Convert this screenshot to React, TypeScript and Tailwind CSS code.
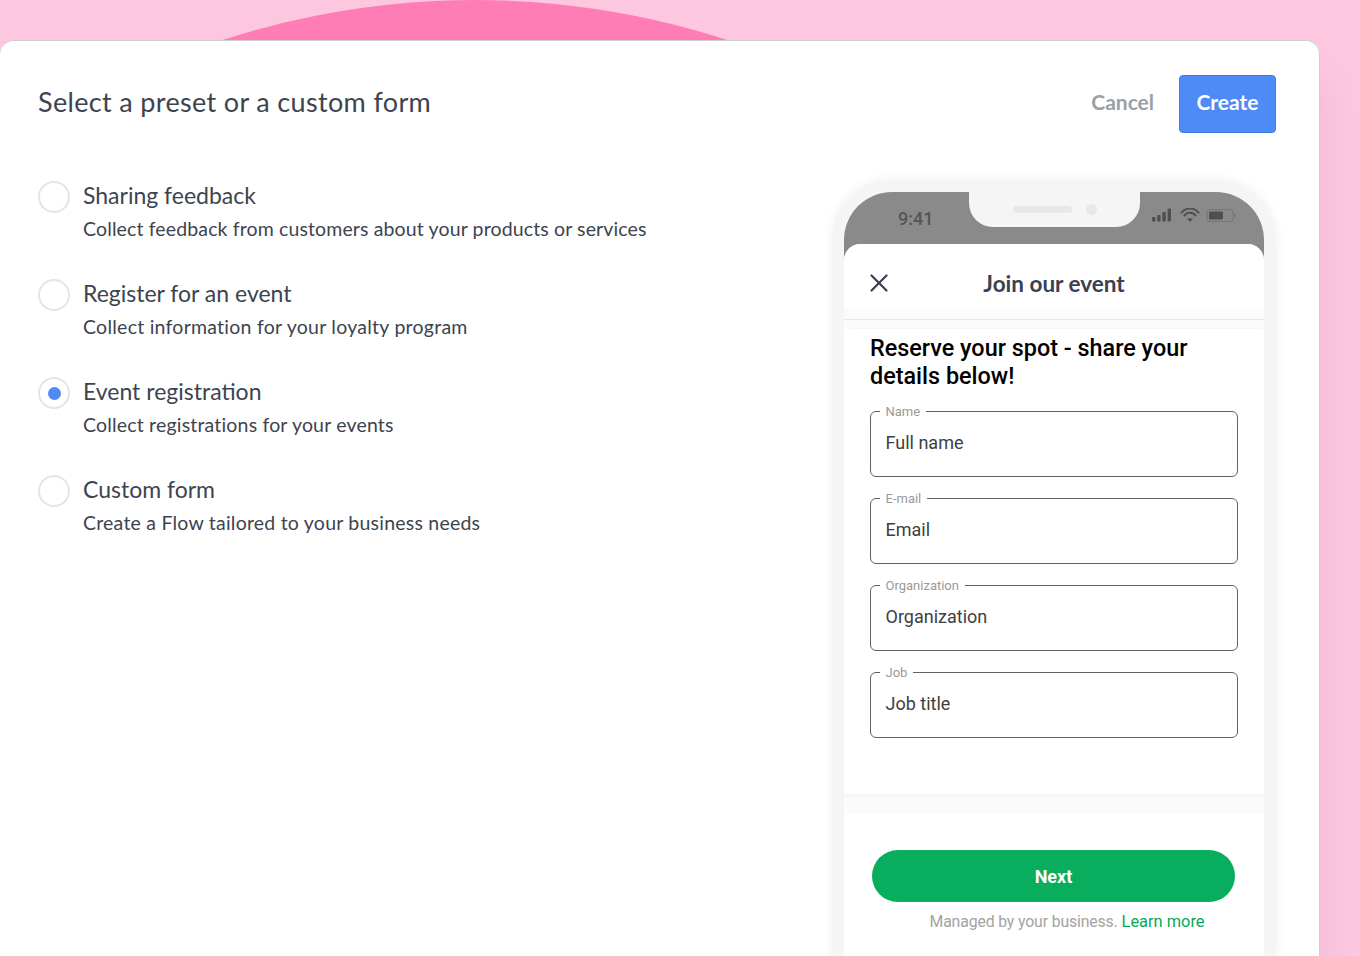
import { X } from "lucide-react";

const presets = [
  { title: "Sharing feedback", desc: "Collect feedback from customers about your products or services", track: "tracking-[0.13px]" },
  { title: "Register for an event", desc: "Collect information for your loyalty program", track: "tracking-[0.25px]" },
  { title: "Event registration", desc: "Collect registrations for your events", selected: true, track: "tracking-[0.18px]" },
  { title: "Custom form", desc: "Create a Flow tailored to your business needs", track: "tracking-[0.22px]" },
];

const fields = [
  { label: "Name", value: "Full name" },
  { label: "E-mail", value: "Email" },
  { label: "Organization", value: "Organization" },
  { label: "Job", value: "Job title" },
];

function Radio({ on }: { on?: boolean }) {
  return (
    <span className="flex h-[32px] w-[32px] shrink-0 items-center justify-center rounded-full border-2 border-[#e4e4e6] bg-white">
      {on && <span className="h-[13px] w-[13px] rounded-full bg-[#4d8bf7]" />}
    </span>
  );
}

function StatusIcons() {
  return (
    <svg width="84" height="16" viewBox="0 0 84 16">
      <rect x="0" y="9" width="3.4" height="4.5" rx="1" fill="#4f4f4f" />
      <rect x="5.2" y="7" width="3.4" height="6.5" rx="1" fill="#4f4f4f" />
      <rect x="10.4" y="4" width="3.4" height="9.5" rx="1" fill="#4f4f4f" />
      <rect x="15.6" y="0.5" width="3.4" height="13" rx="1" fill="#4f4f4f" />
      <path d="M29 5.2a11 11 0 0 1 18 0" fill="none" stroke="#4f4f4f" strokeWidth="2" />
      <path d="M32 8.2a7 7 0 0 1 12 0" fill="none" stroke="#4f4f4f" strokeWidth="2" />
      <path d="M35 10.5h6L38 14z" fill="#4f4f4f" />
      <rect x="55" y="1.5" width="26" height="12" rx="3.5" fill="none" stroke="#777" strokeWidth="1.2" />
      <rect x="57" y="3.5" width="14" height="8" rx="1" fill="#4f4f4f" />
      <rect x="82" y="6" width="1.5" height="3" fill="#777" />
    </svg>
  );
}

function Field({ label, value }: { label: string; value: string }) {
  return (
    <div className="relative flex h-[65.5px] items-center rounded-[6px] border border-[#5f6368] px-[14.5px] pb-[3px] text-[18px] text-[#3c4043]">
      <span className="absolute left-[8.5px] top-[-8px] bg-white px-[6px] text-[13px] leading-[16px] text-[#9a9a9a]">{label}</span>
      {value}
    </div>
  );
}

function Phone() {
  return (
    <div className="mr-[1px] h-[780px] w-[442px] shrink-0 rounded-t-[58px] bg-[#f5f5f5] px-[11px] pt-[11px] shadow-[0_0_12px_rgba(0,0,0,0.08)]">
      <div className="h-full overflow-hidden rounded-t-[48px] bg-[#8a8a8a]">
        <div className="relative flex h-[52px] items-start justify-between pl-[54px] pr-[28px] pt-[16px]">
          <span className="mt-[-1px] text-[18px] font-medium leading-[24px] text-[#555]">9:41</span>
          <StatusIcons />
          <div className="absolute left-[125px] top-0 flex h-[35px] w-[171px] items-center justify-center gap-[14px] rounded-b-[24px] bg-[#f5f5f5] pb-[1px]">
            <span className="h-[7px] w-[59px] rounded-full bg-[#e8e8e8]" />
            <span className="h-[11px] w-[11px] rounded-full bg-[#e8e8e8]" />
          </div>
        </div>
        <div className="flex h-full flex-col overflow-hidden rounded-t-[16px] bg-[#fbfbfb]">
          <div className="relative flex h-[65px] shrink-0 items-center justify-center rounded-t-[16px] bg-white">
            <X size={30} strokeWidth={1.8} className="absolute left-[19.5px] top-[24px] text-[#3a4250]" />
            <span className="pt-[15px] font-['Lato',sans-serif] text-[22.5px] font-bold text-[#3a4250]">Join our event</span>
          </div>
          <div className="flex h-[20px] shrink-0 items-center">
            <div className="h-px w-full bg-[#e7e7e7]" />
          </div>
          <div className="h-[465px] shrink-0 bg-white px-[26px] pt-[5px] shadow-[0_1px_6px_rgba(0,0,0,0.05)]">
            <h2 className="text-[23.4px] font-medium leading-[28px] text-black">
              Reserve your spot - share your details below!
            </h2>
            <div className="mt-[21px] flex flex-col gap-[21.5px]">
              {fields.map((f) => <Field key={f.label} {...f} />)}
            </div>
          </div>
          <div className="h-[20px] shrink-0" />
          <div className="flex-1 bg-white pl-[28px] pr-[29px] pt-[36px]">
            <div className="flex h-[52px] items-center justify-center rounded-full bg-[#08ad5d] text-[18px] font-bold text-white">Next</div>
            <p className="mt-[10px] pl-[27px] text-center text-[15.8px] leading-[20px] text-[#a3a3a3]">
              <span className="tracking-[-0.13px]">Managed by your business.</span> <span className="text-[16.4px] text-[#08a65b]">Learn more</span>
            </p>
          </div>
        </div>
      </div>
    </div>
  );
}

export default function App() {
  return (
    <div className="relative h-[956px] w-[1360px] overflow-hidden bg-[#fec7e0] font-['Roboto',sans-serif]">
      {/* the arc peeking out above the card */}
      <div className="absolute left-[-342px] top-0 h-[1634px] w-[1634px] rounded-full bg-[#ff7db5]" />
      <div className="relative top-[40px] h-[916px] w-[1320px] rounded-t-[14px] border-t border-r border-[#cfcfcf] bg-white pl-[38px] pr-[43px] shadow-[0_40px_40px_rgba(0,0,0,0.08)]">
        <div className="flex items-start justify-between pt-[34px]">
          <h1 className="pt-[8px] font-['Lato',sans-serif] text-[27px] leading-[38px] tracking-[0.34px] text-[#3d4450]">Select a preset or a custom form</h1>
          <div className="flex items-center gap-[25px]">
            <span className="pb-[4px] font-['Lato',sans-serif] text-[21px] font-bold text-[#9aa0a6]">Cancel</span>
            <div className="flex h-[58px] w-[97px] items-center justify-center rounded-[4px] border border-[#3f7de8] bg-[#4d8bf7] pb-[4px] font-['Lato',sans-serif] text-[21px] font-bold text-white">Create</div>
          </div>
        </div>
        <div className="flex justify-between pt-[48px]">
          <div className="flex flex-col gap-[34px]">
            {presets.map((p) => (
              <div key={p.title} className="flex gap-[13px]">
                <Radio on={p.selected} />
                <div className="font-['Lato',sans-serif] text-[#3d4450]">
                  <div className="mt-[-2px] text-[23px] leading-[32px]">{p.title}</div>
                  <div className={`mt-[1px] text-[19.5px] leading-[33px] ${p.track}`}>{p.desc}</div>
                </div>
              </div>
            ))}
          </div>
          <Phone />
        </div>
      </div>
    </div>
  );
}
